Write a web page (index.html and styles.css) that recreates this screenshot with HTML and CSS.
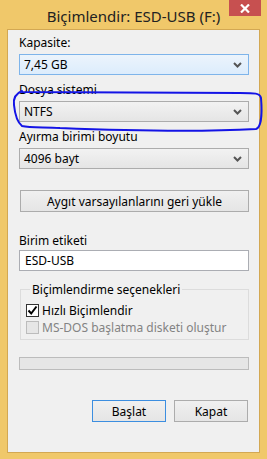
FILE: index.html
```html
<!DOCTYPE html>
<html lang="tr">
<head>
  <meta charset="UTF-8">
  <title>Biçimlendir: ESD-USB (F:)</title>
  <link rel="stylesheet" href="styles.css">
</head>
<body>
  <!-- Window frame -->
  <div class="window">
    <div class="titlebar">
      <span class="title">Biçimlendir: ESD-USB (F:)</span>
      <button class="close-btn" aria-label="Kapat">
        <svg width="10" height="9" viewBox="0 0 10 9"><path d="M1 0.5 L9 8.5 M9 0.5 L1 8.5" stroke="#fff" stroke-width="2.2"/></svg>
      </button>
    </div>

    <div class="panel">
      <!-- Capacity -->
      <div class="field field-first">
        <div class="label">Kapasite:</div>
        <div class="combo combo-focus">
          <span>7,45 GB</span>
          <svg class="chev" width="9" height="6" viewBox="0 0 9 6"><path d="M1 1 L4.5 4.5 L8 1" fill="none" stroke="#555" stroke-width="2"/></svg>
        </div>
      </div>

      <!-- File system -->
      <div class="field">
        <div class="label">Dosya sistemi</div>
        <div class="combo">
          <span>NTFS</span>
          <svg class="chev" width="9" height="6" viewBox="0 0 9 6"><path d="M1 1 L4.5 4.5 L8 1" fill="none" stroke="#555" stroke-width="2"/></svg>
        </div>
      </div>

      <!-- Allocation unit -->
      <div class="field">
        <div class="label">Ayırma birimi boyutu</div>
        <div class="combo">
          <span>4096 bayt</span>
          <svg class="chev" width="9" height="6" viewBox="0 0 9 6"><path d="M1 1 L4.5 4.5 L8 1" fill="none" stroke="#555" stroke-width="2"/></svg>
        </div>
      </div>

      <button class="btn btn-wide">Aygıt varsayılanlarını geri yükle</button>

      <!-- Volume label -->
      <div class="field field-label">
        <div class="label">Birim etiketi</div>
        <div class="textbox">ESD-USB</div>
      </div>

      <!-- Format options -->
      <fieldset class="group">
        <legend>Biçimlendirme seçenekleri</legend>
        <div class="check-row">
          <span class="check checked">
            <svg width="11" height="11" viewBox="0 0 11 11"><path d="M1.5 5.5 L4.2 8.5 L9.5 1.5" fill="none" stroke="#000" stroke-width="2"/></svg>
          </span>
          <span>Hızlı Biçimlendir</span>
        </div>
        <div class="check-row disabled">
          <span class="check"></span>
          <span>MS-DOS başlatma disketi oluştur</span>
        </div>
      </fieldset>

      <div class="progress"></div>

      <div class="actions">
        <button class="btn btn-default">Başlat</button>
        <button class="btn">Kapat</button>
      </div>
    </div>
  </div>

  <!-- Hand-drawn highlight around the file system box -->
  <svg class="scribble" width="267" height="459" viewBox="0 0 267 459">
    <path d="M22 91 C17 93 13 97 14 105 C15 115 17 122 22 126 C30 128 45 127 60 128 C110 130 200 132 256 129 C262 127 262 110 261 98 C260 93 255 93 240 93 L22 92" fill="none" stroke="#1414e6" stroke-width="2" stroke-linecap="round"/>
  </svg>
</body>
</html>
```

FILE: styles.css
```css
/* Window 8 style dialog */
body {
  margin: 0;
  background-color: #f0c86a;
  font-family: "Noto Sans", "DejaVu Sans", sans-serif;
  font-size: 12px;
  color: #000;
}

.window {
  width: 267px;
  height: 459px;
  position: relative;
}

/* Title bar */
.titlebar {
  height: 29px;
  position: relative;
  display: flex;
  justify-content: center;
  align-items: center;
}

.title {
  font-size: 15px;
  color: #222;
  margin-top: 2px;
}

.close-btn {
  position: absolute;
  top: 0;
  left: 229px;
  width: 32px;
  height: 16px;
  border: none;
  padding: 0;
  background-color: #c75050;
  display: flex;
  justify-content: center;
  align-items: center;
}

/* Client area */
.panel {
  margin: 0 7px;
  height: 422px;
  border: 1px solid #d3a853;
  background-color: #f0f0f0;
  padding: 0 10px 0 11px;
}

.field {
  margin-top: 7px;
}

.field-first {
  margin-top: 5px;
}

.label {
  height: 16px;
  line-height: 16px;
  margin-bottom: 3px;
}

/* Combo boxes */
.combo {
  height: 19px;
  border: 1px solid #acacac;
  background: linear-gradient(#f2f2f2, #e5e5e5);
  display: flex;
  align-items: center;
  justify-content: space-between;
  padding: 0 6px 0 4px;
}

.combo-focus {
  border-color: #7eb4ea;
  background: linear-gradient(#ecf4fc, #dcecfc);
}

/* Buttons */
.btn {
  font-family: inherit;
  font-size: 12px;
  color: #000;
  height: 22px;
  border: 1px solid #acacac;
  background: linear-gradient(#f0f0f0, #e5e5e5);
  padding: 0;
}

.btn-wide {
  display: block;
  width: 229px;
  margin: 21px 0 0 1px;
}

.btn-default {
  border-color: #3c8ee0;
}

/* Text box */
.field-label {
  margin-top: 21px;
}

.field-label .label {
  margin-bottom: 1px;
}

.textbox {
  height: 19px;
  line-height: 19px;
  border: 1px solid #abadb3;
  background-color: #fff;
  padding-left: 5px;
}

/* Group box */
.group {
  margin: 10px 0 0 1px;
  border: 1px solid #dcdcdc;
  padding: 4px 0 8px 5px;
  height: 45px;
}

.group legend {
  padding: 0 2px;
  margin-left: 4px;
}

.check-row {
  display: flex;
  align-items: center;
  gap: 3px;
  height: 17px;
}

.check {
  width: 11px;
  height: 11px;
  border: 1px solid #333;
  background-color: #fff;
  display: flex;
  align-items: center;
  justify-content: center;
}

.disabled {
  color: #838383;
}

.disabled .check {
  border-color: #bcbcbc;
  background-color: #e6e6e6;
}

/* Progress bar */
.progress {
  margin-top: 17px;
  height: 11px;
  border: 1px solid #bcbcbc;
  background-color: #e6e6e6;
}

.actions {
  display: flex;
  justify-content: flex-end;
  gap: 8px;
  margin-top: 30px;
  padding-right: 1px;
}

.actions .btn {
  width: 74px;
}

.scribble {
  position: absolute;
  top: 0;
  left: 0;
  pointer-events: none;
}
```
